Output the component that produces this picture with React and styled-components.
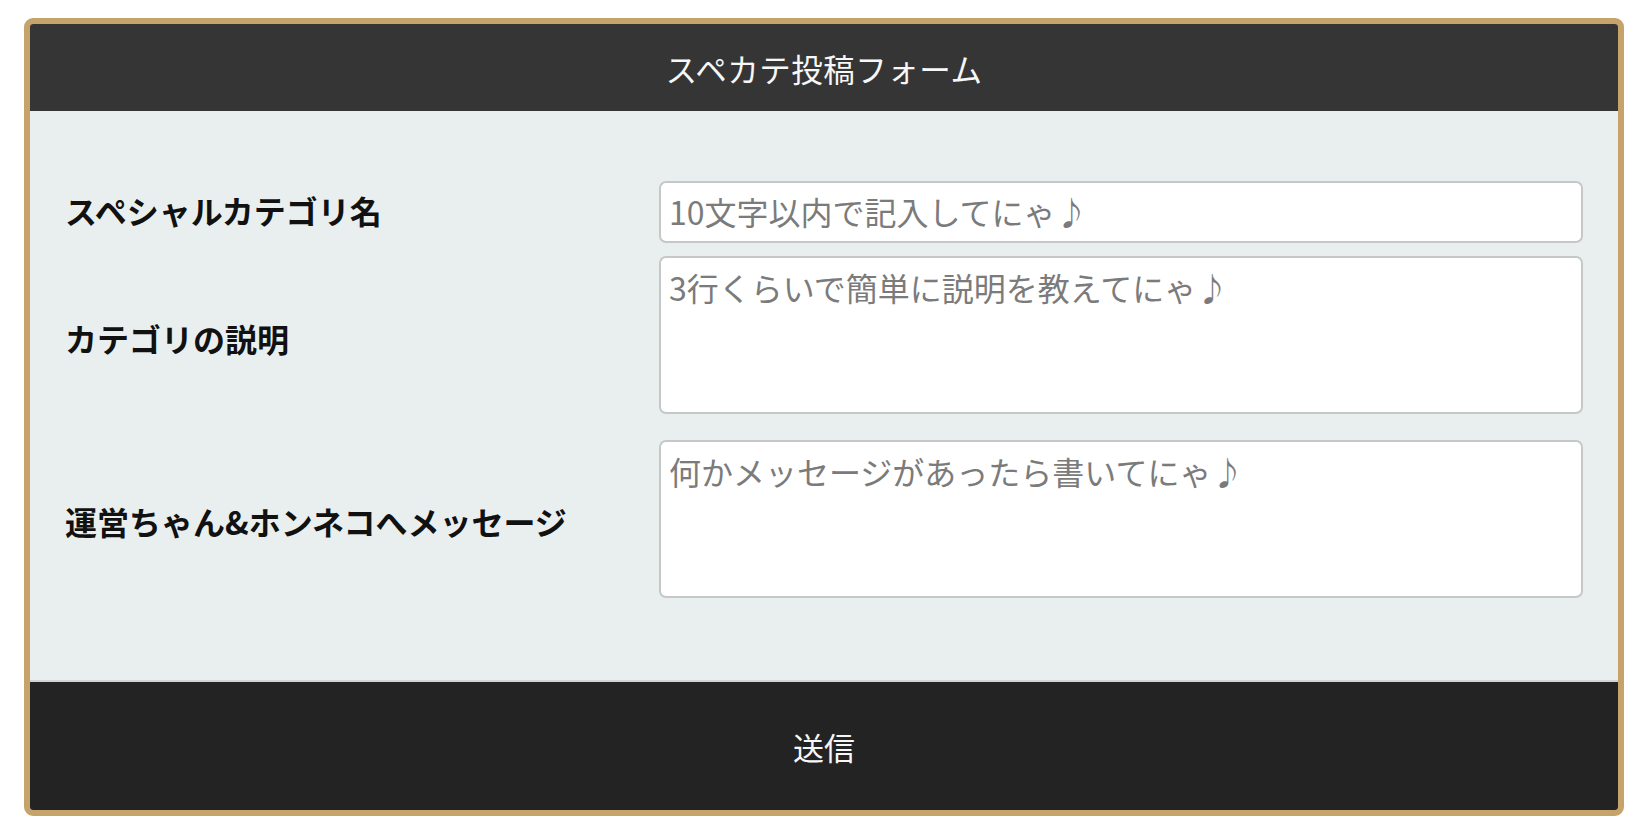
import React from "react";
import styled, { createGlobalStyle } from "styled-components";

const GlobalStyle = createGlobalStyle`
  html, body {
    margin: 0;
    padding: 0;
    background: #ffffff;
  }
  body {
    font-family: "Noto Sans CJK JP", "Noto Sans", sans-serif;
  }
  * {
    box-sizing: border-box;
  }
`;

// top = space above the row, drop = how far the label sits under the field's middle
const fields = [
  { label: "スペシャルカテゴリ名", placeholder: "10文字以内で記入してにゃ♪", multi: false, top: 0, drop: 0 },
  { label: "カテゴリの説明", placeholder: "3行くらいで簡単に説明を教えてにゃ♪", multi: true, top: 13, drop: 5 },
  { label: "運営ちゃん&ホンネコへメッセージ", placeholder: "何かメッセージがあったら書いてにゃ♪", multi: true, top: 26, drop: 4 },
];

const App = () => {
  return (
    <Page>
      <GlobalStyle />
      <Frame onSubmit={(e) => e.preventDefault()}>
        <Header>スペカテ投稿フォーム</Header>
        <Body>
          {fields.map((f) => (
            <Row key={f.label} $top={f.top}>
              <Label $drop={f.drop}>{f.label}</Label>
              {f.multi ? (
                <TextArea placeholder={f.placeholder} />
              ) : (
                <TextInput type="text" placeholder={f.placeholder} />
              )}
            </Row>
          ))}
        </Body>
        <SubmitBtn type="submit">送信</SubmitBtn>
      </Frame>
    </Page>
  );
};

const Page = styled.div`
  /* outer spacing round the form */
  padding: 18px 24px 25px;
  display: flex;
  justify-content: center;
`;

const Frame = styled.form`
  width: 1600px;
  margin: 0;
  border: 6px solid #c6a36b;
  border-radius: 9px;
  overflow: hidden;
  display: flex;
  flex-direction: column;
`;

const Header = styled.h1`
  margin: 0;
  height: 87px;
  display: flex;
  align-items: center;
  justify-content: center;
  background-color: #353535;
  color: #f7f7f7;
  font-size: 31.5px;
  font-weight: 400;
  letter-spacing: 0.5px;
`;

const Body = styled.div`
  background-color: #e9efef;
  padding: 70px 35px 82px;
  display: flex;
  flex-direction: column;
`;

const Row = styled.div`
  display: grid;
  grid-template-columns: 594px 1fr;
  align-items: center;
  margin-top: ${(p) => p.$top}px;
`;

const Label = styled.label`
  color: #111111;
  font-size: 32px;
  font-weight: 700;
  line-height: 1.3;
  padding-top: ${(p) => p.$drop * 2}px;
  padding-bottom: 2px;
`;

const fieldBase = `
  width: 100%;
  display: block;
  margin: 0;
  background: #ffffff;
  border: 2px solid #c6c8c8;
  border-radius: 7px;
  font-family: "Noto Sans CJK JP", "Noto Sans", sans-serif;
  font-size: 32px;
  color: #333333;
  outline: none;
  &::placeholder {
    color: #7b7b7b;
  }
`;

const TextInput = styled.input`
  ${fieldBase}
  height: 62px;
  padding: 0 8px 3px;
  line-height: 56px;
`;

const TextArea = styled.textarea`
  ${fieldBase}
  height: 158px;
  padding: 6px 8px;
  line-height: 46px;
  resize: none;
`;

const SubmitBtn = styled.button`
  height: 130px;
  border: none;
  border-top: 2px solid #d2d4d4;
  background-color: #232323;
  color: #f7f7f7;
  font-family: "Noto Sans CJK JP", "Noto Sans", sans-serif;
  font-size: 31px;
  cursor: pointer;
`;

export default App;
